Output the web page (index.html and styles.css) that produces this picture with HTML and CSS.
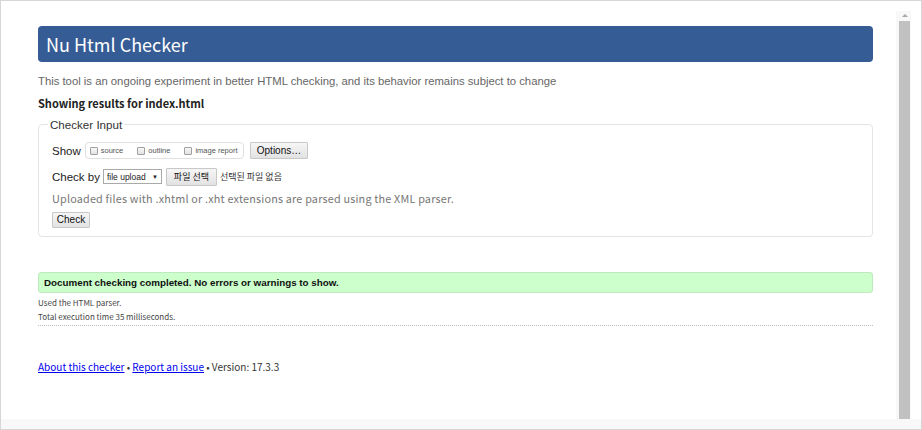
FILE: index.html
```html
<!DOCTYPE html>
<html lang="en">
<head>
    <meta charset="UTF-8">
    <title>Nu Html Checker</title>
    <link rel="stylesheet" href="styles.css">
</head>
<body>
    <div class="frame">
        <div class="main">
            <div class="page">
                <h1 class="title">Nu Html Checker</h1>
                <p class="intro">This tool is an ongoing experiment in better HTML checking, and its behavior remains subject to change</p>
                <h2 class="results-for">Showing results for index.html</h2>

                <fieldset class="checker-input">
                    <legend>Checker Input</legend>
                    <div class="row">
                        <span class="label">Show</span>
                        <span class="show-box">
                            <label><span class="cb"></span>source</label>
                            <label><span class="cb"></span>outline</label>
                            <label><span class="cb"></span>image report</label>
                        </span>
                        <button class="btn">Options…</button>
                    </div>
                    <div class="row row-last">
                        <span class="label">Check by</span>
                        <span class="select">file upload <span class="arrow">▼</span></span>
                        <button class="btn btn-file">파일 선택</button>
                        <span class="no-file">선택된 파일 없음</span>
                    </div>
                    <p class="hint">Uploaded files with .xhtml or .xht extensions are parsed using the XML parser.</p>
                    <button class="btn btn-check">Check</button>
                </fieldset>

                <p class="success">Document checking completed. No errors or warnings to show.</p>
                <div class="details">
                    <p>Used the HTML parser.</p>
                    <p>Total execution time 35 milliseconds.</p>
                </div>

                <p class="footer"><a href="#">About this checker</a> • <a href="#">Report an issue</a> • Version: 17.3.3</p>
            </div>
            <div class="scrollbar">
                <div class="scroll-up"></div>
                <div class="thumb"></div>
            </div>
        </div>
        <div class="bottom-strip"></div>
    </div>
</body>
</html>
```

FILE: styles.css
```css
* {
    box-sizing: border-box;
}
body {
    margin: 0;
    font-family: "Liberation Sans", Arial, sans-serif;
    background: #fff;
}
.frame {
    width: 922px;
    height: 430px;
    border: 1px solid #d6d6d6;
    display: flex;
    flex-direction: column;
}
.main {
    flex: 1;
    display: flex;
    min-height: 0;
}
.page {
    flex: 1;
    padding: 25px 23px 0 37px;
}
.bottom-strip {
    height: 10px;
    background: #f8f8f8;
}
.scrollbar {
    width: 15px;
    margin: 10px 10px 0 0;
    padding: 0 1px 0 3px;
    background: #f8f8f8;
    display: flex;
    flex-direction: column;
}
.scroll-up {
    height: 10px;
    position: relative;
}
.scroll-up::after {
    content: "";
    position: absolute;
    left: 3px;
    top: 3px;
    border-left: 3px solid transparent;
    border-right: 3px solid transparent;
    border-bottom: 3px solid #a8a8a8;
}
.thumb {
    flex: 1;
    background: #c1c1c1;
}

.title {
    margin: 0;
    height: 36px;
    padding: 0 8px;
    background: #365c95;
    border-radius: 4px;
    color: #fff;
    font-family: "Noto Sans CJK KR", "Noto Sans", sans-serif;
    font-weight: 400;
    font-size: 18px;
    line-height: 36px;
}
.intro {
    margin: 11px 0 0;
    color: #666;
    font-size: 11.3px;
    line-height: 16px;
}
.results-for {
    margin: 6px 0 0;
    font-family: "Noto Sans CJK KR", "Noto Sans", sans-serif;
    font-size: 11px;
    font-weight: 700;
    line-height: 16px;
    color: #222;
}

.checker-input {
    margin: 7px 0 0;
    padding: 11px 13px 8px;
    border: 1px solid #e4e4e4;
    border-radius: 4px;
}
.checker-input legend {
    padding: 0 2px;
    margin-left: -4px;
    font-size: 11.6px;
    color: #333;
}
.row {
    display: flex;
    align-items: center;
    height: 17px;
    margin-bottom: 9px;
    font-size: 11.5px;
    color: #222;
}
.row-last {
    margin-bottom: 5px;
}
.label {
    margin-right: 4px;
}
.show-box {
    display: flex;
    align-items: center;
    width: 159px;
    height: 17px;
    padding: 0 4px;
    margin-right: 6px;
    border: 1px solid #e0e0e0;
    border-radius: 4px;
    font-size: 7.5px;
    color: #555;
}
.show-box label {
    display: flex;
    align-items: center;
    margin-right: 14px;
}
.show-box label:last-child {
    margin-right: 0;
}
.cb {
    width: 8px;
    height: 8px;
    margin-right: 3px;
    border: 1px solid #a0a0a0;
    border-radius: 1px;
    background: linear-gradient(#f8f8f8, #e2e2e2);
}
.btn {
    height: 17px;
    padding: 0 6px;
    border: 1px solid #c8c8c8;
    border-radius: 1px;
    background: linear-gradient(#f6f6f6, #e2e2e2);
    font-family: "Liberation Sans", Arial, sans-serif;
    font-size: 10px;
    color: #111;
}
.select {
    display: flex;
    align-items: center;
    justify-content: space-between;
    width: 59px;
    height: 15px;
    padding: 0 3px;
    margin: 0 4px 0 -1px;
    border: 1px solid #a9a9a9;
    font-size: 8.5px;
}
.select .arrow {
    font-size: 6px;
}
.btn-file {
    width: 51px;
    height: 18px;
    padding: 0;
    font-family: "Noto Sans CJK KR", sans-serif;
    font-size: 9px;
}
.no-file {
    margin-left: 3px;
    font-family: "Noto Sans CJK KR", sans-serif;
    font-size: 9px;
    color: #333;
}
.hint {
    margin: 0 0 3px;
    font-family: "Noto Sans CJK KR", "Noto Sans", sans-serif;
    font-size: 10.8px;
    line-height: 16px;
    color: #777;
    letter-spacing: 0.2px;
}
.btn-check {
    width: 38px;
    height: 16px;
    padding: 0;
    font-size: 10px;
}

.success {
    margin: 35px 0 0;
    height: 21px;
    padding: 0 5px;
    background: #ccffcc;
    border: 1px solid #bfe9bf;
    border-radius: 3px;
    font-size: 9.8px;
    font-weight: 700;
    line-height: 19px;
    color: #111;
}
.details {
    padding: 3px 0 0;
    border-bottom: 1px dotted #bbb;
    font-family: "Noto Sans CJK KR", "Noto Sans", sans-serif;
    font-size: 8px;
    color: #444;
}
.details p {
    margin: 0;
    line-height: 14px;
}
.details p:last-child {
    margin-bottom: 1px;
}
.footer {
    margin: 34px 0 0;
    font-family: "Noto Sans CJK KR", "Noto Sans", sans-serif;
    font-size: 10px;
    line-height: 14px;
    color: #333;
}
.footer a {
    color: #0000ee;
}
```
